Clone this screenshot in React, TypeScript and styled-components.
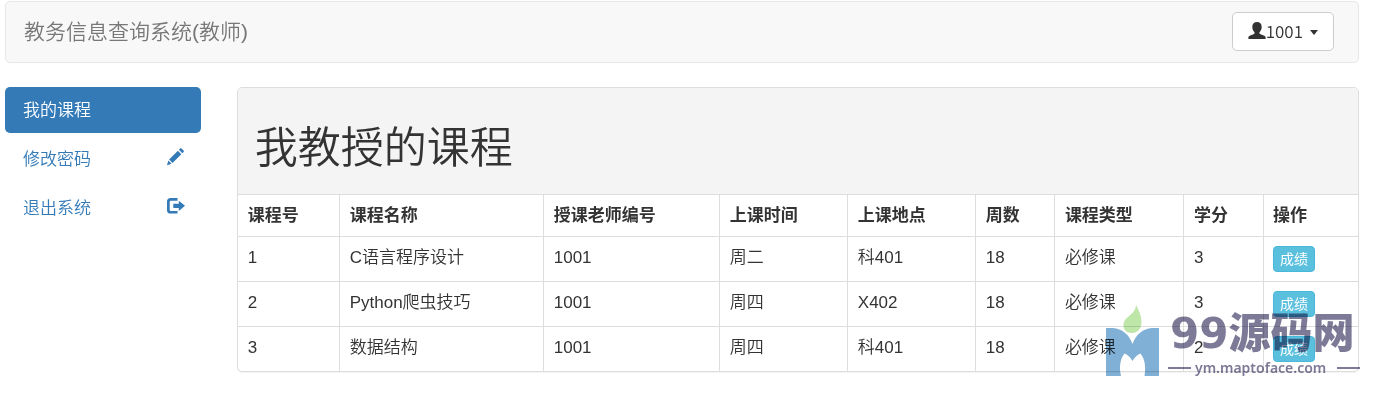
import React from "react";
import styled, { createGlobalStyle, css } from "styled-components";

const GlobalStyle = createGlobalStyle`
  * { box-sizing: border-box; }
  body {
    margin: 0;
    background: #fff;
    color: #333;
    font: 17px/23px "Liberation Sans", "Noto Sans CJK SC", sans-serif;
  }
`;

const Page = styled.div`
  padding: 1px 23px 24px 5px;
`;

const Navbar = styled.header`
  display: flex;
  align-items: center;
  justify-content: space-between;
  min-height: 62px;
  padding: 0 24px 1px 18px;
  margin-bottom: 24px;
  border: 1px solid #e7e7e7;
  border-radius: 5px;
  background: #f8f8f8;
`;

const Brand = styled.a`
  color: #777;
  font-size: 21px;
  font-weight: 350;
  line-height: 24px;
  text-decoration: none;
`;

const UserButton = styled.button`
  display: flex;
  align-items: center;
  height: 39px;
  padding: 0 15px 2px;
  border: 1px solid #ccc;
  border-radius: 5px;
  background: #fff;
  color: #333;
  font: 17px/23px "Noto Sans CJK SC", sans-serif;
  font-weight: 350;
  cursor: pointer;
`;

const Caret = styled.span`
  margin: 3px 0 0 7px;
  border-top: 5px solid #333;
  border-left: 4px solid transparent;
  border-right: 4px solid transparent;
`;

const Columns = styled.div`
  display: grid;
  grid-template-columns: repeat(12, minmax(0, 1fr));
  column-gap: 36px;
  align-items: start;
`;

const SideNav = styled.nav`
  grid-column: span 2;
  display: flex;
  flex-direction: column;
  gap: 3px;
`;

const SideLink = styled.a<{ $active?: boolean }>`
  display: flex;
  justify-content: space-between;
  padding: 12px 16px 11px 18px;
  border-radius: 5px;
  color: #337ab7;
  font-weight: 350;
  text-decoration: none;
  ${(p) =>
    p.$active &&
    css`
      background: #337ab7;
      color: #fff;
    `}
`;

const Main = styled.main`
  position: relative;
  grid-column: span 10;
`;

const Panel = styled.section`
  border: 1px solid #ddd;
  border-radius: 5px;
  background: #fff;
  box-shadow: 0 1px 1px rgba(0, 0, 0, 0.05);
  overflow: hidden;
`;

const PanelHeading = styled.div`
  padding: 37px 17px 23px;
  background: #f4f4f4;
`;

const Title = styled.h1`
  margin: 0;
  font-size: 43px;
  font-weight: 350;
  line-height: 46px;
`;

const Table = styled.table`
  width: 100%;
  table-layout: fixed;
  border-collapse: separate;
  border-spacing: 0;
`;

const cell = css`
  padding: 9px;
  padding-left: 10px;
  border-top: 1px solid #ddd;
  border-right: 1px solid #ddd;
  text-align: left;
  vertical-align: top;
  &:last-child {
    padding-left: 9px;
    border-right: 0;
  }
`;

const HeadCell = styled.th`
  ${cell}
  font-weight: 700;
`;

const Cell = styled.td`
  ${cell}
  font-weight: 350;
`;

const GradeButton = styled.button`
  display: block;
  height: 26px;
  padding: 0 6px;
  border: 1px solid #46b8da;
  border-radius: 4px;
  background: #5bc0de;
  color: #fff;
  font: 14px/24px "Liberation Sans", "Noto Sans CJK SC", sans-serif;
  cursor: pointer;
`;

const Watermark = styled.div`
  position: absolute;
  right: -1px;
  bottom: -6px;
  display: flex;
  align-items: flex-end;
  gap: 9px;
  color: #7c7a97;
  mix-blend-mode: multiply;
  pointer-events: none;
`;

const MarkText = styled.div`
  display: flex;
  flex-direction: column;
  width: 192px;
`;

const MarkName = styled.div`
  padding-left: 2px;
  font: 900 42px/48px "DejaVu Sans", "Noto Sans CJK SC", sans-serif;
  white-space: nowrap;
`;

const MarkAddress = styled.div`
  display: flex;
  align-items: center;
  gap: 4px;
  font: 600 14px/20px "Noto Sans", sans-serif;
  &::before,
  &::after {
    content: "";
    width: 23px;
    height: 2px;
    background: #7c7a97;
  }
  &::after { margin-left: auto; }
`;

const UserIcon = () => (
  <svg width="18" height="18" viewBox="0 0 18 18" fill="currentColor" aria-hidden="true">
    <path d="M9 0C6.200 0 4.300 1.900 4.300 4.700c0 2.300.8 4.200 2 5.300.5.6.4 1.500-.3 1.900L1.700 13.700C.7 14.200.4 14.700.4 15.600V17h17.200v-1.400c0-.9-.3-1.400-1.300-1.900L12 11.900c-.7-.4-.8-1.300-.3-1.900 1.200-1.100 2-3 2-5.300C13.700 1.900 11.800 0 9 0z" />
  </svg>
);

const PencilIcon = () => (
  <svg width="19" height="18" viewBox="0 0 19 18" fill="currentColor" aria-hidden="true">
    <path d="M14.200.5c.4-.4.9-.4 1.300 0l2.100 2.100c.4.4.4.9 0 1.300l-1.300 1.300-3.400-3.400zM11.900 2.800l3.400 3.400-8.800 8.800-3.400-3.400zM2.300 12.400l3.300 3.300L1 17.200z" />
  </svg>
);

const LogoutIcon = () => (
  <svg width="19" height="18" viewBox="0 0 19 18" fill="currentColor" aria-hidden="true">
    <path d="M11.500 1v2.700H5.200c-1 0-1.500.5-1.500 1.500v7.200c0 1 .5 1.500 1.500 1.500h6.300v2.700H4.700C2.200 16.600 1 15.400 1 12.900V4.700C1 2.200 2.200 1 4.700 1z" />
    <path d="M12.800 3.700L19 8.800l-6.200 5.100v-3H7.300V6.700h5.500z" />
  </svg>
);

const MarkLogo = () => (
  <svg width="53" height="73" viewBox="0 0 53 73" aria-hidden="true">
    <path
      fill="#80b0d6"
      d="M0 23h7c9 1 16 6 19.500 16C30 29 37 24 46 23h7v48H38.500c1.500-9 .5-17-4-22.500-3.500 1.500-6 4-8 7.500-2-3.500-4.500-6-8-7.500-4.500 5.500-5.500 13.500-3.500 22.500H0z"
    />
    <path
      fill="#bfe6a9"
      d="M30 0c3 6 5.500 11 5.500 16.500C35.500 24 31.500 28 26 28c-5 0-8.500-2.500-8.500-7.500C17.500 11 29 11 30 0z"
    />
  </svg>
);

const headings: [string, number][] = [
  ["课程号", 102],
  ["课程名称", 204],
  ["授课老师编号", 176],
  ["上课时间", 128],
  ["上课地点", 128],
  ["周数", 79],
  ["课程类型", 129],
  ["学分", 80],
  ["操作", 94],
];

const courses = [
  ["1", "C语言程序设计", "1001", "周二", "科401", "18", "必修课", "3"],
  ["2", "Python爬虫技巧", "1001", "周四", "X402", "18", "必修课", "3"],
  ["3", "数据结构", "1001", "周四", "科401", "18", "必修课", "2"],
];

export default function App() {
  return (
    <Page>
      <GlobalStyle />
      <Navbar>
        <Brand href="#">教务信息查询系统(教师)</Brand>
        <UserButton type="button" aria-haspopup="menu">
          <UserIcon />
          1001
          <Caret />
        </UserButton>
      </Navbar>
      <Columns>
        <SideNav>
          <SideLink href="#courses" $active>我的课程</SideLink>
          <SideLink href="#password">
            修改密码
            <PencilIcon />
          </SideLink>
          <SideLink href="#logout">
            退出系统
            <LogoutIcon />
          </SideLink>
        </SideNav>
        <Main>
          <Panel>
            <PanelHeading>
              <Title>我教授的课程</Title>
            </PanelHeading>
            <Table>
              <colgroup>
                {headings.map(([label, width]) => (
                  <col key={label} width={width} />
                ))}
              </colgroup>
              <thead>
                <tr>
                  {headings.map(([label]) => (
                    <HeadCell key={label} scope="col">{label}</HeadCell>
                  ))}
                </tr>
              </thead>
              <tbody>
                {courses.map((course) => (
                  <tr key={course[0]}>
                    {course.map((value, i) => (
                      <Cell key={i}>{value}</Cell>
                    ))}
                    <Cell>
                      <GradeButton type="button">成绩</GradeButton>
                    </Cell>
                  </tr>
                ))}
              </tbody>
            </Table>
          </Panel>
          <Watermark>
            <MarkLogo />
            <MarkText>
              <MarkName>99源码网</MarkName>
              <MarkAddress>ym.maptoface.com</MarkAddress>
            </MarkText>
          </Watermark>
        </Main>
      </Columns>
    </Page>
  );
}
